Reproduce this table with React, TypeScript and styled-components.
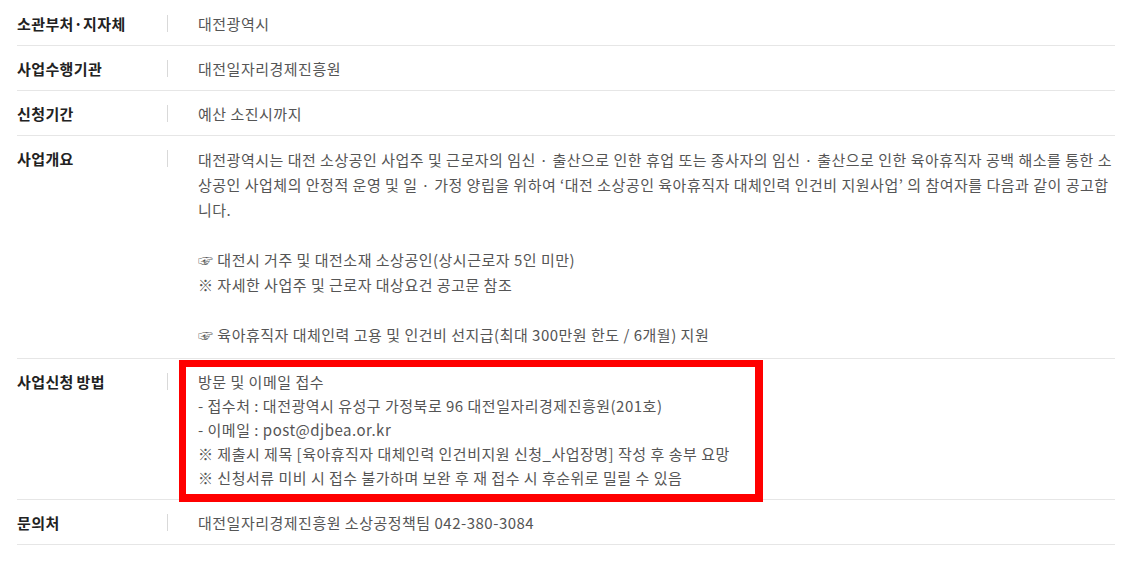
import React from "react";
import styled, { createGlobalStyle } from "styled-components";

const GlobalStyle = createGlobalStyle`
  html, body {
    margin: 0;
    padding: 0;
    background: #ffffff;
  }
  body {
    font-family: "Noto Sans CJK KR", "Noto Sans", sans-serif;
  }
`;

const Page = styled.div`
  padding: 1px 20px 0 17px;
`;

const InfoTable = styled.dl`
  margin: 0;
  display: flex;
  flex-direction: column;
`;

const Row = styled.div`
  display: grid;
  grid-template-columns: 151px 1fr;
  border-bottom: 1px solid #e6e6e6;
`;

const Label = styled.dt`
  position: relative;
  margin: 0;
  padding: 11px 0 9px;
  font-size: 15px;
  line-height: 24px;
  font-weight: 700;
  letter-spacing: 0.4px;
  word-spacing: -1px;
  color: #222222;

  &::after {
    content: "";
    position: absolute;
    right: 0;
    top: 14px;
    width: 1px;
    height: 17px;
    background: #d9d9d9;
  }
`;

const Value = styled.dd<{ $lh?: number; $pt?: number; $pb?: number }>`
  position: relative;
  margin: 0;
  padding: ${(p) => p.$pt ?? 11}px 0 ${(p) => p.$pb ?? 9}px 30px;
  font-size: 15px;
  line-height: ${(p) => p.$lh ?? 24}px;
  letter-spacing: 0.5px;
  color: #555555;
`;

const Line = styled.div`
  white-space: nowrap;
`;

const Blank = styled.div`
  height: 25px;
`;

const Highlight = styled.div`
  position: absolute;
  left: 11px;
  top: 1px;
  width: 584px;
  height: 142px;
  box-sizing: border-box;
  border: 7px solid #ff0000;
  border-right-width: 8px;
  border-bottom-width: 8px;
  pointer-events: none;
`;

export default function App() {
  return (
    <>
      <GlobalStyle />
      <Page>
        <InfoTable>
          <Row>
            <Label>소관부처·지자체</Label>
            <Value>대전광역시</Value>
          </Row>
          <Row>
            <Label>사업수행기관</Label>
            <Value>대전일자리경제진흥원</Value>
          </Row>
          <Row>
            <Label>신청기간</Label>
            <Value>예산 소진시까지</Value>
          </Row>
          <Row>
            <Label>사업개요</Label>
            <Value $lh={25} $pt={11} $pb={11}>
              <Line>
                대전광역시는 대전 소상공인 사업주 및 근로자의 임신 · 출산으로 인한 휴업 또는 종사자의 임신 · 출산으로 인한 육아휴직자 공백 해소를 통한 소
              </Line>
              <Line>
                상공인 사업체의 안정적 운영 및 일 · 가정 양립을 위하여 ‘대전 소상공인 육아휴직자 대체인력 인건비 지원사업’ 의 참여자를 다음과 같이 공고합
              </Line>
              <Line>니다.</Line>
              <Blank />
              <Line>☞ 대전시 거주 및 대전소재 소상공인(상시근로자 5인 미만)</Line>
              <Line>※ 자세한 사업주 및 근로자 대상요건 공고문 참조</Line>
              <Blank />
              <Line>☞ 육아휴직자 대체인력 고용 및 인건비 선지급(최대 300만원 한도 / 6개월) 지원</Line>
            </Value>
          </Row>
          <Row>
            <Label>사업신청 방법</Label>
            <Value>
              <Line>방문 및 이메일 접수</Line>
              <Line>- 접수처 : 대전광역시 유성구 가정북로 96 대전일자리경제진흥원(201호)</Line>
              <Line>- 이메일 : post@djbea.or.kr</Line>
              <Line>※ 제출시 제목 [육아휴직자 대체인력 인건비지원 신청_사업장명] 작성 후 송부 요망</Line>
              <Line>※ 신청서류 미비 시 접수 불가하며 보완 후 재 접수 시 후순위로 밀릴 수 있음</Line>
              <Highlight />
            </Value>
          </Row>
          <Row>
            <Label>문의처</Label>
            <Value>대전일자리경제진흥원 소상공정책팀 042-380-3084</Value>
          </Row>
        </InfoTable>
      </Page>
    </>
  );
}
